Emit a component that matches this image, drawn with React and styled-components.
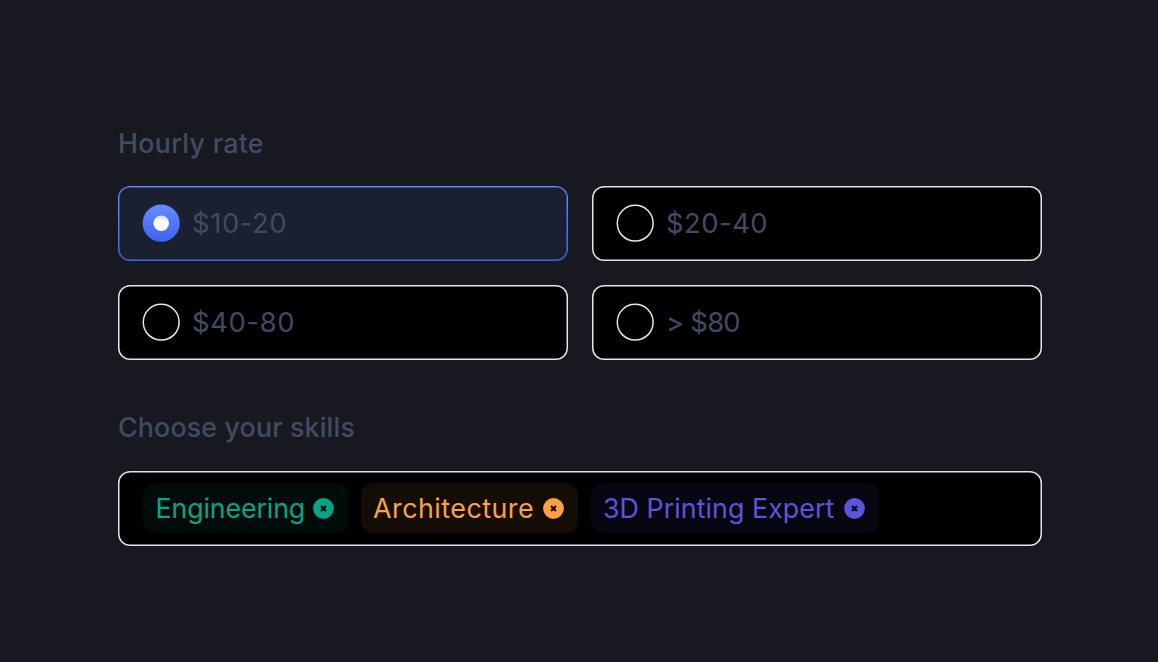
import React from 'react';
import styled, { createGlobalStyle } from 'styled-components';

const rates = [
  { label: '$10-20', checked: true, spacing: 0.6 },
  { label: '$20-40', spacing: 0.5 },
  { label: '$40-80', spacing: 0.65 },
  { label: '> $80', spacing: -0.75 },
];

const skills = [
  { name: 'Engineering', color: '#09a388', bg: '#000c0a', width: 205, spacing: -0.14 },
  { name: 'Architecture', color: '#ffa043', bg: '#140d05', width: 217.5, spacing: 0.5 },
  { name: '3D Printing Expert', color: '#5b55de', bg: '#070711', width: 288, spacing: 0.05 },
];

const GlobalStyle = createGlobalStyle`
  * {
    box-sizing: border-box;
  }
  body {
    margin: 0;
    background: #181821;
    font-family: 'Inter', sans-serif;
    color: #3f4c63;
  }
`;

const FormDiv = styled.div`
  height: 662px;
  padding: 125px 116px 0 118px;
`;

const TitleH2 = styled.h2`
  font-size: 26.8px;
  font-weight: 500;
  line-height: 36px;
  margin: 0 0 25px;
  letter-spacing: ${({ $spacing }) => $spacing}px;
`;

const SkillTitle = styled(TitleH2)`
  margin: 49px 0 26px;
`;

const RateGrid = styled.div`
  display: grid;
  grid-template-columns: 1fr 1fr;
  gap: 24px;
`;

const RateLabel = styled.label`
  height: 75px;
  display: flex;
  align-items: center;
  padding: 0 0 2px 24px;
  border-radius: 12px;
  background: #000;
  box-shadow: inset 0 0 0 1.5px #e4e4e4;
  font-size: 27.4px;
  letter-spacing: ${({ $spacing }) => $spacing}px;
`;

const ActiveLabel = styled(RateLabel)`
  padding-left: 23px;
  border: 1px solid transparent;
  background: linear-gradient(#1b2031, #1b2031) padding-box, linear-gradient(#658aff, #3b63f0) border-box;
  box-shadow: inset 0 0 0 0.5px #4b70ee;
  color: #414b5d;
`;

const RadioSvg = styled.svg`
  width: 38px;
  height: 38px;
  margin-right: 12px;
`;

const SkillBox = styled.div`
  height: 75px;
  display: flex;
  align-items: center;
  gap: 12.5px;
  padding: 0 0 1px 25px;
  border-radius: 12px;
  background: #000;
  box-shadow: inset 0 0 0 1.5px #e4e4e4;
`;

const SkillTag = styled.div`
  width: ${({ $width }) => $width}px;
  height: 50px;
  display: flex;
  align-items: center;
  justify-content: space-between;
  padding: 0 14px 0 12.5px;
  border-radius: 12px;
  background: ${({ $bg }) => $bg};
  color: ${({ $color }) => $color};
  font-size: 26.8px;
  white-space: nowrap;
  letter-spacing: ${({ $spacing }) => $spacing}px;
`;

const RemoveSvg = styled.svg`
  width: 21px;
  height: 21px;
  flex: none;
`;

const Radio = ({ checked }) => (
  <RadioSvg viewBox="0 0 38 38">
    {checked ? (
      <>
        <defs>
          <linearGradient id="radio" x1="0" y1="0" x2="0" y2="1">
            <stop offset="0" stopColor="#6889ff" />
            <stop offset="1" stopColor="#3c64f3" />
          </linearGradient>
          <linearGradient id="dot" x1="0" y1="0" x2="0" y2="1">
            <stop offset="0" stopColor="#d9dfff" />
            <stop offset="0.4" stopColor="#fff" />
          </linearGradient>
        </defs>
        <circle cx="19.2" cy="19.2" r="18.6" fill="url(#radio)" />
        <circle cx="19.2" cy="19.2" r="7.8" fill="url(#dot)" />
      </>
    ) : (
      <circle cx="19.2" cy="19.2" r="17.9" fill="#000" stroke="#e8e8e8" strokeWidth="1.5" />
    )}
  </RadioSvg>
);

const SkillForm = () => {
  return (
    <FormDiv>
      <TitleH2 $spacing={0.3}>Hourly rate</TitleH2>
      <RateGrid>
        {rates.map((rate) => {
          const Label = rate.checked ? ActiveLabel : RateLabel;
          return (
            <Label key={rate.label} $spacing={rate.spacing}>
              <Radio checked={rate.checked} />
              {rate.label}
            </Label>
          );
        })}
      </RateGrid>
      <SkillTitle $spacing={0.15}>Choose your skills</SkillTitle>
      <SkillBox>
        {skills.map((skill) => (
          <SkillTag key={skill.name} $color={skill.color} $bg={skill.bg} $width={skill.width} $spacing={skill.spacing}>
            {skill.name}
            <RemoveSvg viewBox="0 0 21 21">
              <circle cx="10.5" cy="10.5" r="10.4" fill={skill.color} />
              <path d="M8 8l5 5M13 8l-5 5" stroke={skill.bg} strokeWidth="2.2" />
            </RemoveSvg>
          </SkillTag>
        ))}
      </SkillBox>
    </FormDiv>
  );
};

const App = () => (
  <>
    <GlobalStyle />
    <SkillForm />
  </>
);

export default App;
